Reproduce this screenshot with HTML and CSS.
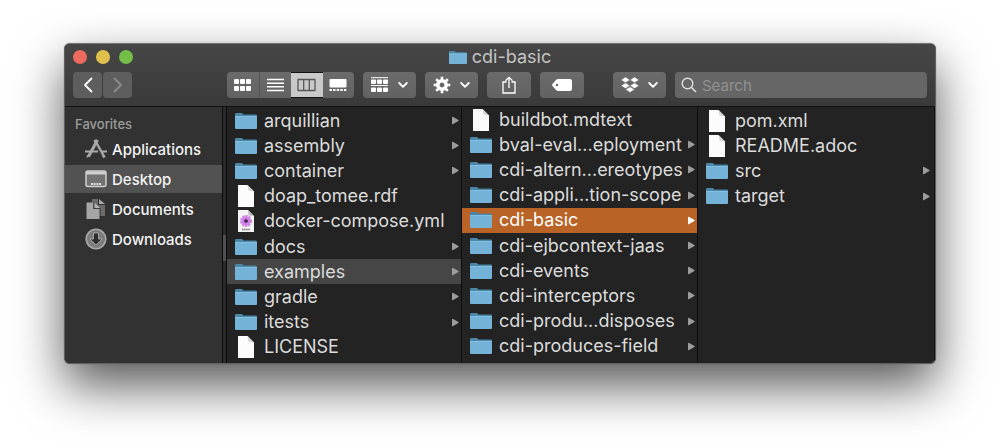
FILE: index.html
```html
<!DOCTYPE html>
<html lang="en">
<head>
    <meta charset="utf-8">
    <title>cdi-basic</title>
    <link rel="stylesheet" href="styles.css">
</head>
<body>
    <svg class="sprite" aria-hidden="true">
        <symbol id="folder" viewBox="0 0 22 18">
            <path d="M0 2.2Q0 1 1.2 1H6.5Q7.3 1 7.8 1.8L8.3 2.6H20.8Q22 2.6 22 3.8V5H0Z" fill="#4b87a6"/>
            <path d="M0 4.2H22V16Q22 17 21 17H1Q0 17 0 16Z" fill="#74b2d7"/>
            <path d="M0 4.5H22" stroke="#8cc5e6" stroke-width=".8"/>
        </symbol>
        <symbol id="file" viewBox="0 0 22 22">
            <path d="M3 0H12.500L19 6.500V22H3Z" fill="#fcfcfc"/>
            <path d="M12.500 0L19 6.500L13.500 5.500Z" fill="#d5d5d5"/>
        </symbol>
        <symbol id="yaml" viewBox="0 0 22 22">
            <path d="M3 0H13L19 6V22H3Z" fill="#f4f4f4"/>
            <path d="M13 0L19 6L13.500 5.500Z" fill="#bdbdbd"/>
            <circle cx="11" cy="11" r="4.500" fill="#cf7ee6"/>
            <circle cx="11" cy="11" r="5" fill="none" stroke="#cf7ee6" stroke-width="2" stroke-dasharray="2.200 1.000"/>
            <circle cx="11" cy="11" r="1.800" fill="#352040"/>
            <path d="M7 19.500H15" stroke="#777" stroke-width="1.400" stroke-dasharray="1.500 .6"/>
        </symbol>
        <symbol id="arrow" viewBox="0 0 8 10">
            <path d="M0 1.200Q0 .3 .9 .7L7.300 4.300Q8 5 7.300 5.700L.9 9.300Q0 9.700 0 8.800Z" fill="currentColor"/>
        </symbol>
        <symbol id="chevron" viewBox="0 0 10 6">
            <path d="M1.200 1L5 4.800L8.800 1" fill="none" stroke="currentColor" stroke-width="1.800" stroke-linecap="round" stroke-linejoin="round"/>
        </symbol>
    </svg>

    <main class="window">
        <header class="toolbar">
            <div class="titlebar">
                <div class="lights">
                    <button class="light close" aria-label="Close"></button>
                    <button class="light minimize" aria-label="Minimize"></button>
                    <button class="light zoom" aria-label="Zoom"></button>
                </div>
                <h1 class="title"><svg class="title-icon"><use href="#folder"/></svg>cdi-basic</h1>
            </div>
            <div class="tools">
                <div class="nav">
                    <button class="tool nav-btn" aria-label="Back">
                        <svg width="10" height="16" viewBox="0 0 10 16"><path d="M8.500 1.500L2 8L8.500 14.500" fill="none" stroke="#fff" stroke-width="1.800" stroke-linecap="round" stroke-linejoin="round"/></svg>
                    </button>
                    <button class="tool nav-btn" aria-label="Forward" disabled>
                        <svg width="10" height="16" viewBox="0 0 10 16"><path d="M1.500 1.500L8 8L1.500 14.500" fill="none" stroke="#8b8b8b" stroke-width="1.800" stroke-linecap="round" stroke-linejoin="round"/></svg>
                    </button>
                </div>
                <div class="views">
                    <button class="view" aria-label="Icons">
                        <svg width="18" height="14" viewBox="0 0 18 14" fill="#fff"><rect x="0" y="1" width="5" height="5" rx="1"/><rect x="6" y="1" width="5" height="5" rx="1"/><rect x="12" y="1" width="5" height="5" rx="1"/><rect x="0" y="8" width="5" height="5" rx="1"/><rect x="6" y="8" width="5" height="5" rx="1"/><rect x="12" y="8" width="5" height="5" rx="1"/></svg>
                    </button>
                    <button class="view" aria-label="List">
                        <svg width="17" height="14" viewBox="0 0 17 14"><path d="M0 1.500H17M0 5.200H17M0 8.800H17M0 12.500H17" stroke="#fff" stroke-width="1.400"/></svg>
                    </button>
                    <button class="view active" aria-label="Columns">
                        <svg width="19" height="14" viewBox="0 0 19 14"><path d="M1 1.500H18V12.500H1ZM6.700 1.500V12.500M12.300 1.500V12.500" fill="none" stroke="#565656" stroke-width="1.300" stroke-linejoin="round"/></svg>
                    </button>
                    <button class="view" aria-label="Gallery">
                        <svg width="18" height="14" viewBox="0 0 18 14" fill="#fff"><rect x=".5" y="1" width="17" height="8.500" rx="1"/><path d="M.5 12H17.500" stroke="#fff" stroke-width="2" stroke-dasharray="2.400 1.200"/></svg>
                    </button>
                </div>
                <button class="tool drop" aria-label="Group items">
                    <svg width="18" height="16" viewBox="0 0 18 16" fill="#fff"><path d="M0 .7H17M0 8.500H17" stroke="#fff" stroke-width="1"/><rect x="0" y="2.500" width="5" height="4.500" rx="1"/><rect x="6" y="2.500" width="5" height="4.500" rx="1"/><rect x="12" y="2.500" width="5" height="4.500" rx="1"/><rect x="0" y="10.500" width="5" height="4.500" rx="1"/><rect x="6" y="10.500" width="5" height="4.500" rx="1"/><rect x="12" y="10.500" width="5" height="4.500" rx="1"/></svg>
                    <svg class="chev"><use href="#chevron"/></svg>
                </button>
                <button class="tool drop" aria-label="Actions">
                    <svg width="18" height="18" viewBox="-9 -9 18 18"><circle r="4.200" fill="none" stroke="#fff" stroke-width="3.600"/><path d="M0-5V-8.300M0 5V8.300M-5 0H-8.300M5 0H8.300M3.500-3.500L5.800-5.800M-3.500-3.500L-5.800-5.800M3.500 3.500L5.800 5.800M-3.500 3.500L-5.800 5.800" stroke="#fff" stroke-width="2.600"/></svg>
                    <svg class="chev"><use href="#chevron"/></svg>
                </button>
                <button class="tool wide" aria-label="Share">
                    <svg width="16" height="18" viewBox="0 0 16 18"><path d="M5.500 6H2V17H14V6H10.500M8 12V1.500M4.500 4.800L8 1.300L11.500 4.800" fill="none" stroke="#fff" stroke-width="1.300"/></svg>
                </button>
                <button class="tool wide" aria-label="Edit tags">
                    <svg width="20" height="12" viewBox="0 0 20 12"><path fill-rule="evenodd" d="M6 0H18Q20 0 20 2V10Q20 12 18 12H6Q5 12 4 11L.5 7Q-.3 6 .5 5L4 1Q5 0 6 0ZM5 4.800A1.200 1.200 0 1 0 5 7.200A1.200 1.200 0 1 0 5 4.800Z" fill="#fff"/></svg>
                </button>
                <button class="tool drop dropbox" aria-label="Dropbox">
                    <svg width="18" height="16" viewBox="0 0 18 16" fill="#fff"><path d="M4.500 0L9 2.900L4.500 5.800L0 2.900ZM13.500 0L18 2.900L13.500 5.800L9 2.900ZM4.500 5.800L9 8.700L4.500 11.600L0 8.700ZM13.500 5.800L18 8.700L13.500 11.600L9 8.700ZM9 9.700L13.500 12.600L9 15.500L4.500 12.600Z" stroke="#676767" stroke-width=".5"/></svg>
                    <svg class="chev"><use href="#chevron"/></svg>
                </button>
                <label class="search">
                    <svg width="16" height="16" viewBox="0 0 16 16"><circle cx="6.500" cy="6.500" r="5.300" fill="none" stroke="#dedede" stroke-width="1.400"/><path d="M10.500 10.500L15 15" stroke="#dedede" stroke-width="1.600"/></svg>
                    <input type="search" placeholder="Search" aria-label="Search">
                </label>
            </div>
        </header>

        <div class="browser">
            <nav class="sidebar">
                <h2>Favorites</h2>
                <a href="#">
                    <svg width="22" height="20" viewBox="0 0 22 20"><g fill="none" stroke="#a9a9a9" stroke-width="2.200"><path d="M12.500 1L3.500 17.500" stroke-width="3"/><path d="M9.500 1L19.500 18.500" stroke-width="2.600"/><path d="M0 12.500H13M17 12.500H22"/></g><path d="M11 6L17 16.500" stroke="#323232" stroke-width=".7"/><path d="M1.500 19L2 16L4.500 17.300Z" fill="#a9a9a9"/></svg>
                    Applications
                </a>
                <a href="#" class="selected">
                    <svg width="22" height="20" viewBox="0 0 22 20"><rect x="1" y="2" width="20" height="15.500" rx="2" fill="#737373" stroke="#d0d0d0" stroke-width="1.500"/><path d="M1 4H21" stroke="#d0d0d0" stroke-width="3"/><path d="M6 15H16" stroke="#ddd" stroke-width="2" stroke-dasharray="2 .7"/></svg>
                    Desktop
                </a>
                <a href="#">
                    <svg width="22" height="20" viewBox="0 0 22 20"><path d="M7 0H13V6H20V17H13L7 4Z" fill="#6b6b6b"/><path d="M14 0L20 5H14Z" fill="#a9a9a9"/><path d="M1.500 3.500H8.500V10H14.500V20H1.500Z" fill="#a5a5a5"/><path d="M9.500 3.500L14.800 9H9.500Z" fill="#b5b5b5"/><path d="M8.800 2.500V9.500H15.200V18" fill="none" stroke="#323232" stroke-width=".8"/></svg>
                    Documents
                </a>
                <a href="#">
                    <svg width="22" height="22" viewBox="0 0 22 22"><circle cx="11" cy="11" r="9.800" fill="#7c7c7c" stroke="#a8a8a8" stroke-width="1.600"/><path d="M8.500 5H13.500V11H17L11 17L5 11H8.500Z" fill="#2d2d2d" stroke="#b5b5b5" stroke-width=".8"/></svg>
                    Downloads
                </a>
            </nav>

            <div class="scroller"></div>

            <section class="column">
                <a href="#" class="row"><svg class="icon"><use href="#folder"/></svg><span>arquillian</span><svg class="more"><use href="#arrow"/></svg></a>
                <a href="#" class="row"><svg class="icon"><use href="#folder"/></svg><span>assembly</span><svg class="more"><use href="#arrow"/></svg></a>
                <a href="#" class="row"><svg class="icon"><use href="#folder"/></svg><span>container</span><svg class="more"><use href="#arrow"/></svg></a>
                <a href="#" class="row"><svg class="icon"><use href="#file"/></svg><span>doap_tomee.rdf</span></a>
                <a href="#" class="row"><svg class="icon"><use href="#yaml"/></svg><span>docker-compose.yml</span></a>
                <a href="#" class="row"><svg class="icon"><use href="#folder"/></svg><span>docs</span><svg class="more"><use href="#arrow"/></svg></a>
                <a href="#" class="row open"><svg class="icon"><use href="#folder"/></svg><span>examples</span><svg class="more"><use href="#arrow"/></svg></a>
                <a href="#" class="row"><svg class="icon"><use href="#folder"/></svg><span>gradle</span><svg class="more"><use href="#arrow"/></svg></a>
                <a href="#" class="row"><svg class="icon"><use href="#folder"/></svg><span>itests</span><svg class="more"><use href="#arrow"/></svg></a>
                <a href="#" class="row"><svg class="icon"><use href="#file"/></svg><span>LICENSE</span></a>
            </section>

            <section class="column scrolled">
                <a href="#" class="row"><svg class="icon"><use href="#file"/></svg><span>buildbot.mdtext</span></a>
                <a href="#" class="row"><svg class="icon"><use href="#folder"/></svg><span>bval-eval...eployment</span><svg class="more"><use href="#arrow"/></svg></a>
                <a href="#" class="row"><svg class="icon"><use href="#folder"/></svg><span>cdi-altern...ereotypes</span><svg class="more"><use href="#arrow"/></svg></a>
                <a href="#" class="row"><svg class="icon"><use href="#folder"/></svg><span>cdi-appli...tion-scope</span><svg class="more"><use href="#arrow"/></svg></a>
                <a href="#" class="row selected"><svg class="icon"><use href="#folder"/></svg><span>cdi-basic</span><svg class="more"><use href="#arrow"/></svg></a>
                <a href="#" class="row"><svg class="icon"><use href="#folder"/></svg><span>cdi-ejbcontext-jaas</span><svg class="more"><use href="#arrow"/></svg></a>
                <a href="#" class="row"><svg class="icon"><use href="#folder"/></svg><span>cdi-events</span><svg class="more"><use href="#arrow"/></svg></a>
                <a href="#" class="row"><svg class="icon"><use href="#folder"/></svg><span>cdi-interceptors</span><svg class="more"><use href="#arrow"/></svg></a>
                <a href="#" class="row"><svg class="icon"><use href="#folder"/></svg><span>cdi-produ...disposes</span><svg class="more"><use href="#arrow"/></svg></a>
                <a href="#" class="row"><svg class="icon"><use href="#folder"/></svg><span>cdi-produces-field</span><svg class="more"><use href="#arrow"/></svg></a>
            </section>

            <section class="column">
                <a href="#" class="row"><svg class="icon"><use href="#file"/></svg><span>pom.xml</span></a>
                <a href="#" class="row"><svg class="icon"><use href="#file"/></svg><span>README.adoc</span></a>
                <a href="#" class="row"><svg class="icon"><use href="#folder"/></svg><span>src</span><svg class="more"><use href="#arrow"/></svg></a>
                <a href="#" class="row"><svg class="icon"><use href="#folder"/></svg><span>target</span><svg class="more"><use href="#arrow"/></svg></a>
            </section>
        </div>
    </main>
</body>
</html>
```
FILE: styles.css
```css
* {
    box-sizing: border-box;
}
body {
    margin: 0;
    padding: 43px 64px 80px;
    background: #fff;
    font-family: Inter, "Liberation Sans", sans-serif;
    color: #dcdcdc;
}
a {
    color: inherit;
    text-decoration: none;
}
button {
    padding: 0;
    border: none;
    color: #fff;
}
svg {
    flex: none;
}
.sprite {
    display: none;
}
.window {
    border: 1px solid #606060;
    border-top-color: #777;
    border-radius: 6px;
    overflow: hidden;
    background: #232323;
    box-shadow: 0 22px 50px rgba(0, 0, 0, 0.66), 0 0 1px rgba(0, 0, 0, 0.5);
}

/* toolbar */
.toolbar {
    padding: 0 8px 8px;
    background: linear-gradient(#464646, #3a3a3a);
    border-bottom: 1px solid #111;
}
.titlebar {
    display: grid;
    grid-template-columns: 1fr auto 1fr;
    align-items: center;
    height: 28px;
    padding-bottom: 2px;
}
.lights {
    display: flex;
    gap: 9px;
}
.light {
    width: 14px;
    height: 14px;
    border-radius: 50%;
}
.close {
    background: #ed6a5e;
}
.minimize {
    background: #e0c04c;
}
.zoom {
    background: #72be47;
}
.title {
    display: flex;
    align-items: center;
    gap: 5px;
    margin: 0;
    font-size: 18px;
    line-height: 24px;
    font-weight: 400;
    color: #c4c4c4;
}
.title-icon {
    width: 18px;
    height: 15px;
}
.tools {
    display: flex;
    gap: 9px;
}
.nav {
    display: flex;
    gap: 1px;
    margin-right: 86px;
}
.tool, .view {
    display: flex;
    align-items: center;
    justify-content: center;
    height: 26px;
    background: linear-gradient(#6b6b6b, #626262);
}
.tool {
    border-radius: 4px;
}
.nav-btn {
    width: 29px;
    background: #5e5e5e;
}
.views {
    display: flex;
    width: 127px;
    border-radius: 4px;
    overflow: hidden;
}
.view {
    flex: 1;
}
.view:first-child {
    border-right: 1px solid #555;
}
.view.active {
    background: #c9c9c9;
    border-top: 1px solid #111;
    border-bottom: 1px solid #111;
}
.drop {
    width: 53px;
    gap: 9px;
}
.wide {
    width: 44px;
}
.dropbox {
    margin-left: 20px;
}
.chev {
    width: 10px;
    height: 6px;
}
.search {
    display: flex;
    flex: 1;
    align-items: center;
    gap: 5px;
    min-width: 0;
    padding: 0 6px;
    border-radius: 4px;
    background: #666;
}
.search input {
    flex: 1;
    min-width: 0;
    padding: 0;
    border: none;
    outline: none;
    background: none;
    font: inherit;
    font-size: 15px;
    color: #fff;
}
.search input::placeholder {
    color: #929292;
}

/* sidebar and columns */
.browser {
    display: grid;
    grid-template-columns: 157px 5px 235px 236px 1fr;
}
.sidebar {
    background: #323232;
}
.sidebar h2 {
    margin: 0;
    padding: 8px 10px 0;
    font-size: 13px;
    line-height: 18px;
    font-weight: 500;
    color: #9d9d9d;
}
.sidebar a {
    display: flex;
    align-items: center;
    gap: 5px;
    height: 28px;
    margin-bottom: 2px;
    padding-left: 20px;
    font-size: 15px;
    font-weight: 500;
    color: #f4f4f4;
}
.sidebar h2 + a {
    margin-top: 2px;
}
.sidebar a.selected {
    background: #525252;
}
.scroller {
    border: 1px solid #0c0c0c;
    border-width: 0 1px;
    background: linear-gradient(#2a2a2a 50%, #505050 50%, #505050 60%, #2a2a2a 60%);
}
.column {
    display: grid;
    grid-template-rows: repeat(10, minmax(25px, 1fr));
    min-height: 256px;
    padding: 1px 0 3px;
    border-right: 1px solid #0f0f0f;
}
.column.scrolled {
    padding: 0 0 4px;
}
.column:last-child .row {
    padding-right: 4px;
}
.row {
    display: flex;
    align-items: center;
    padding: 0 2px 0 8px;
    font-size: 18px;
    line-height: 24px;
    white-space: nowrap;
}
.row.open {
    background: #464646;
}
.row.selected {
    background: #b96426;
    color: #fff;
}
.icon {
    width: 22px;
    height: 22px;
    margin-right: 7px;
}
.more {
    width: 7px;
    height: 9px;
    margin-left: auto;
    color: #9c9c9c;
}
.row.selected .more {
    color: #fff;
}
```
